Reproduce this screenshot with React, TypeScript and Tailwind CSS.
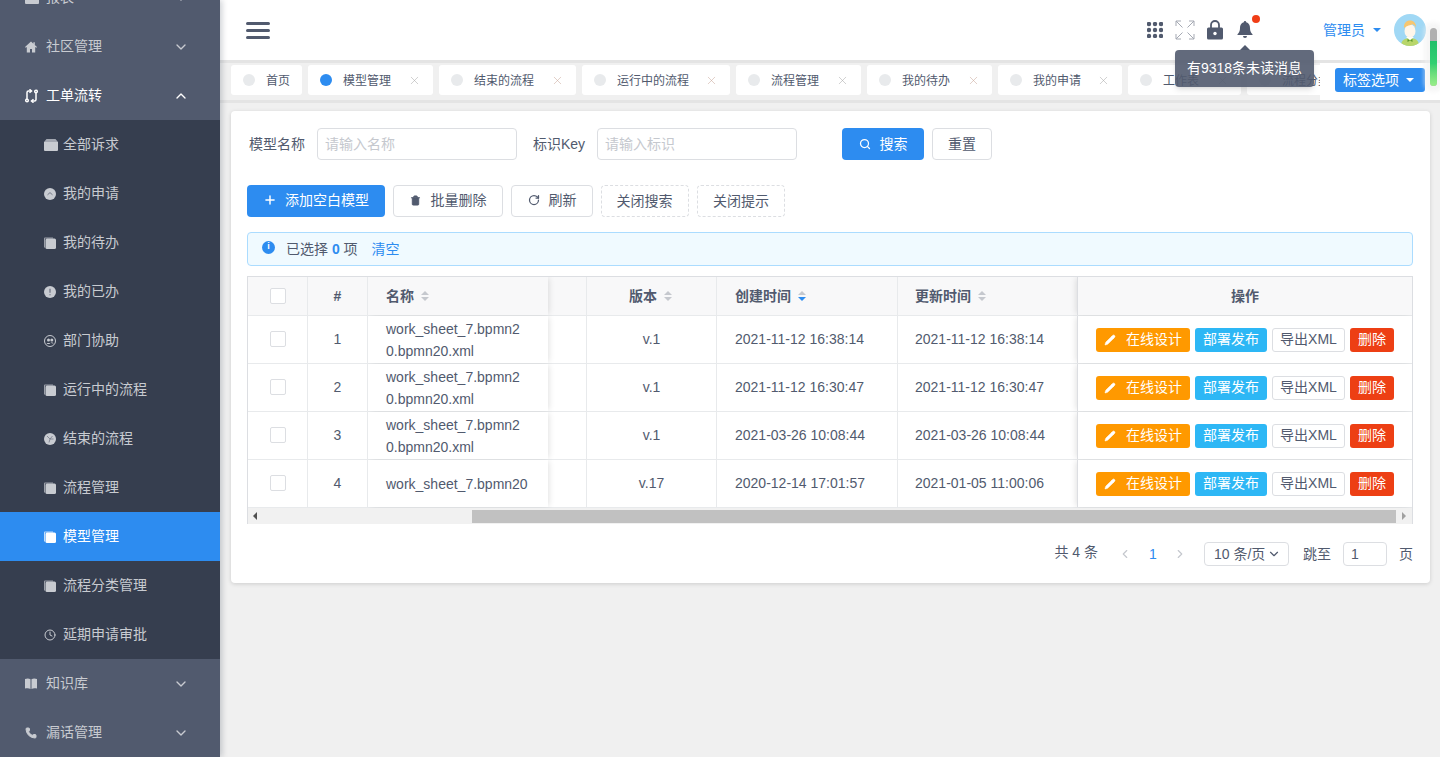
import { ReactNode } from 'react';
import { ChevronDown, ChevronUp, ChevronLeft, ChevronRight, X, Plus, Search, RotateCw, Pencil, Trash2, Clock, Phone } from 'lucide-react';

// ---- sidebar glyphs, drawn to match the reference ----
const HomeIcon = () => (
  <svg viewBox="0 0 12 12" className="w-3 h-3 fill-current"><path d="M6 .5 0 6l.7.7L1.800 6v5.500H5V8h2v3.500h3.200V6l1.100.7L12 6 9.800 4V1.200H8.400v1.500z" /></svg>
);
const SwapIcon = () => (
  <svg viewBox="0 0 13 14" className="w-[13px] h-3.5 fill-none stroke-current" strokeWidth="1.500">
    <path d="M6 2H3.500A1.500 1.500 0 0 0 2 3.500V10" />
    <path d="M4.500 .3 6.500 2l-2 1.700" />
    <circle cx="2" cy="11.500" r="1.300" />
    <path d="M7 12h2.500a1.500 1.500 0 0 0 1.500-1.500V4" />
    <path d="M8.500 13.700 6.500 12l2-1.700" />
    <circle cx="11" cy="2.500" r="1.300" />
  </svg>
);
const BoxIcon = () => (
  <svg viewBox="0 0 14 12" className="w-3.5 h-3 fill-current"><path d="M2.500 0h9L14 3H0z" opacity=".75" /><path d="M0 3h14v8a1 1 0 0 1-1 1H1a1 1 0 0 1-1-1z" /></svg>
);
const CopyIcon = () => (
  <svg viewBox="0 0 12 12" className="w-3 h-3 fill-current"><path d="M0 1.500A1 1 0 0 1 1 .5h8v1H1v9H0z" opacity=".7" /><rect x="1.500" y="1.500" width="10.500" height="10.500" rx="1.500" /></svg>
);
const CircleUpIcon = () => (
  <svg viewBox="0 0 12 12" className="w-3 h-3"><circle cx="6" cy="6" r="6" fill="currentColor" /><path d="M3.500 6.800 6 4.600l2.500 2.200" fill="none" stroke="#6b7080" strokeWidth=".9" /></svg>
);
const CircleAlertIcon = () => (
  <svg viewBox="0 0 12 12" className="w-3 h-3"><circle cx="6" cy="6" r="6" fill="currentColor" /><path d="M6 2.800v4M6 8.200v1" fill="none" stroke="#6b7080" strokeWidth="1.200" /></svg>
);
const CirclePeopleIcon = () => (
  <svg viewBox="0 0 12 12" className="w-3 h-3"><circle cx="6" cy="6" r="5.500" fill="none" stroke="currentColor" /><circle cx="4.500" cy="5" r="1.500" fill="currentColor" /><circle cx="7.800" cy="5" r="1.500" fill="currentColor" /><path d="M2.500 9c.3-1.500 3.500-1.500 4 0M6.500 7.800c1-.8 3-.4 3 1" fill="currentColor" /></svg>
);
const CircleSpokeIcon = () => (
  <svg viewBox="0 0 12 12" className="w-3 h-3"><circle cx="6" cy="6" r="6" fill="currentColor" /><path d="M6 6 3 3M6 6h3.500M6 6l-1 3.500M6 6l2.500-3" stroke="#6b7080" strokeWidth=".7" /></svg>
);
const BookIcon = () => (
  <svg viewBox="0 0 12 11" className="w-3 h-[11px] fill-current"><path d="M0 1c2-.9 4-.8 5.500.2V11C4 10 2 10 0 10.500zM12 1c-2-.9-4-.8-5.500.2V11c1.500-1 3.500-1 5.500-.5z" /></svg>
);

const menuSub: { label: string; icon: ReactNode; active?: boolean }[] = [
  { label: '全部诉求', icon: <BoxIcon /> },
  { label: '我的申请', icon: <CircleUpIcon /> },
  { label: '我的待办', icon: <CopyIcon /> },
  { label: '我的已办', icon: <CircleAlertIcon /> },
  { label: '部门协助', icon: <CirclePeopleIcon /> },
  { label: '运行中的流程', icon: <CopyIcon /> },
  { label: '结束的流程', icon: <CircleSpokeIcon /> },
  { label: '流程管理', icon: <CopyIcon /> },
  { label: '模型管理', icon: <CopyIcon />, active: true },
  { label: '流程分类管理', icon: <CopyIcon /> },
  { label: '延期申请审批', icon: <Clock className="w-3 h-3" strokeWidth={2} /> },
];

function TopItem({ label, icon, open }: { label: string; icon: ReactNode; open?: boolean }) {
  return (
    <div className={`flex items-center h-[49px] pl-[25px] pr-[31px] ${open ? 'text-white' : 'text-[#c8cbd1]'}`}>
      <span className="w-[21px] flex items-center">{icon}</span>
      <span className="flex-1">{label}</span>
      {open ? <ChevronUp className="w-4 h-4" /> : <ChevronDown className="w-4 h-4" />}
    </div>
  );
}

function Sidebar() {
  return (
    <aside className="w-[220px] h-full shrink-0 bg-[#515a6e] overflow-hidden relative z-20 shadow-[2px_0_6px_rgba(0,21,41,0.2)]">
      <div className="-mt-[27px]">
        <TopItem label="报表" icon={<BoxIcon />} />
        <TopItem label="社区管理" icon={<HomeIcon />} />
        <TopItem label="工单流转" icon={<SwapIcon />} open />
        <div className="bg-[#363e4f]">
          {menuSub.map((m) => (
            <div
              key={m.label}
              className={`flex items-center h-[49px] pl-[44px] ${m.active ? 'bg-[#2d8cf0] text-white' : 'text-[#c8cbd1]'}`}
            >
              <span className="w-[19px] flex items-center">{m.icon}</span>
              <span>{m.label}</span>
            </div>
          ))}
        </div>
        <TopItem label="知识库" icon={<BookIcon />} />
        <TopItem label="漏话管理" icon={<Phone className="w-3 h-3" fill="currentColor" />} />
      </div>
    </aside>
  );
}

function Avatar() {
  return (
    <svg viewBox="0 0 32 32" className="w-8 h-8 rounded-full">
      <rect width="32" height="32" fill="#a0d8f5" />
      <path d="M7 32c0-6 4-8 9-8s9 2 9 8z" fill="#b8d66a" />
      <path d="M12 23h8l-4 3z" fill="#fff" />
      <path d="M13.500 25l2.500 1.500-2.500 1.500zM18.500 25L16 26.500l2.500 1.500z" fill="#5d9a2c" />
      <ellipse cx="16" cy="17" rx="5.500" ry="6.800" fill="#fff6ea" />
      <path d="M10 14c-.5-5 2.500-7.500 6-7.500s6.500 2.500 6 7.500c-.5-2-1.800-3.300-3.500-3.700-2 1-5.500 1.200-8.500 3.700z" fill="#f6c670" />
    </svg>
  );
}

function Header() {
  return (
    <header className="h-[60px] shrink-0 bg-white flex items-center pl-[26px] relative z-10">
      <div className="w-6 flex flex-col gap-[4px]">
        <span className="h-[3px] bg-[#515a6e] rounded-sm" />
        <span className="h-[3px] bg-[#515a6e] rounded-sm" />
        <span className="h-[3px] bg-[#515a6e] rounded-sm" />
      </div>
      <div className="flex-1" />
      <svg viewBox="0 0 16 16" className="w-4 h-4 fill-[#515a6e] mr-3">
        {[2, 8, 14].flatMap((y) => [2, 8, 14].map((x) => <circle key={`${x}-${y}`} cx={x} cy={y} r="2.200" />))}
      </svg>
      <svg viewBox="0 0 20 20" className="w-5 h-5 fill-none stroke-[#a5a9b3] mr-3" strokeWidth="1">
        <path d="M1 6V1h5M1 1l6.500 6.500M19 6V1h-5M19 1l-6.500 6.500M1 14v5h5M1 19l6.500-6.500M19 14v5h-5M19 19l-6.500-6.500" />
      </svg>
      <svg viewBox="0 0 16 20" className="w-4 h-5 mr-[14px]">
        <path d="M4 8V5a4 4 0 0 1 8 0v3" fill="none" stroke="#515a6e" strokeWidth="1.800" />
        <rect y="7.500" width="16" height="12" rx="1.500" fill="#515a6e" />
        <circle cx="8" cy="13.500" r="1.700" fill="#fff" />
      </svg>
      <div className="relative w-4 mr-[70px]">
        <svg viewBox="0 0 16 20" className="w-4 h-5 fill-[#515a6e]">
          <path d="M8 1a1.200 1.200 0 0 1 1.200 1.300C12 3 13 5.500 13 8c0 3 .8 4.500 2.500 6.200V15H.5v-.8C2.200 12.500 3 11 3 8c0-2.500 1-5 3.800-5.700A1.200 1.200 0 0 1 8 1zM6 16h4a2 2 0 0 1-4 0z" />
        </svg>
        <span className="absolute -top-[5px] left-[15px] w-2 h-2 rounded-full bg-[#f03d16]" />
        <div className="absolute top-[30px] left-[-62px] w-[139px] h-[37px] rounded bg-[#515a6e]/90 text-white flex items-center justify-center whitespace-nowrap shadow-md">
          <span className="absolute -top-[5px] left-[65px] w-0 h-0 border-x-[5px] border-x-transparent border-b-[5px] border-b-[#515a6e]" />
          有9318条未读消息
        </div>
      </div>
      <span className="text-[#2d8cf0] mr-[8px]">管理员</span>
      <span className="w-0 h-0 border-x-[4px] border-x-transparent border-t-[4px] border-t-[#2d8cf0] mr-[13px]" />
      <div className="mr-[14px]"><Avatar /></div>
    </header>
  );
}

const tabs = [
  { label: '首页', w: 'w-[71px]', plain: true },
  { label: '模型管理', w: 'w-[125px]', active: true },
  { label: '结束的流程', w: 'w-[137px]', warm: true },
  { label: '运行中的流程', w: 'w-[148px]', warm: true },
  { label: '流程管理', w: 'w-[125px]' },
  { label: '我的待办', w: 'w-[125px]', warm: true },
  { label: '我的申请', w: 'w-[124px]' },
  { label: '工作表', w: 'w-[113px]' },
  { label: '流程分类管理', w: 'w-[148px]' },
];

function TabsBar() {
  return (
    <div className="h-[43px] shrink-0 flex bg-[#f0f0f0] border-y-[3px] border-[#e4e4e4]">
      <div className="flex-1 min-w-0 overflow-hidden flex gap-[6px] pl-[11px] pt-[2px]">
        {tabs.map((t) => (
          <div key={t.label} className={`${t.w} shrink-0 h-[30px] bg-white rounded-[3px] flex items-center pl-3 pr-[12px] pt-[1px] text-[12px] text-[#515a6e]`}>
            <span className={`w-3 h-3 rounded-full shrink-0 mr-[11px] -mt-[1px] ${t.active ? 'bg-[#2d8cf0]' : 'bg-[#e8eaec]'}`} />
            <span className="flex-1 whitespace-nowrap">{t.label}</span>
            {!t.plain && <X className={`w-[13px] h-[13px] shrink-0 ${t.warm ? 'text-[#c9a89a]' : 'text-[#aaaaaa]'}`} strokeWidth={1} />}
          </div>
        ))}
      </div>
      <div className="w-[120px] shrink-0 bg-white pl-[15px] pt-[5px]">
        <button className="w-[90px] h-6 rounded-[3px] bg-[#2d8cf0] text-white flex items-center pl-2 gap-[7px]">
          标签选项
          <span className="w-0 h-0 border-x-[4px] border-x-transparent border-t-[4px] border-t-white" />
        </button>
      </div>
    </div>
  );
}

function Btn({ children, className = '' }: { children: ReactNode; className?: string }) {
  return (
    <button className={`h-8 rounded border border-[#dcdee2] bg-white text-[#515a6e] flex items-center justify-center shrink-0 ${className}`}>
      {children}
    </button>
  );
}

const SortArrows = ({ on }: { on?: boolean }) => (
  <span className="inline-flex flex-col gap-[2px] ml-[7px] align-middle">
    <span className="w-0 h-0 border-x-[4px] border-x-transparent border-b-[4px] border-b-[#c5c8ce]" />
    <span className={`w-0 h-0 border-x-[4px] border-x-transparent border-t-[4px] ${on ? 'border-t-[#2d8cf0]' : 'border-t-[#c5c8ce]'}`} />
  </span>
);

const rows = [
  { no: 1, name: ['work_sheet_7.bpmn2', '0.bpmn20.xml'], ver: 'v.1', created: '2021-11-12 16:38:14', updated: '2021-11-12 16:38:14' },
  { no: 2, name: ['work_sheet_7.bpmn2', '0.bpmn20.xml'], ver: 'v.1', created: '2021-11-12 16:30:47', updated: '2021-11-12 16:30:47' },
  { no: 3, name: ['work_sheet_7.bpmn2', '0.bpmn20.xml'], ver: 'v.1', created: '2021-03-26 10:08:44', updated: '2021-03-26 10:08:44' },
  { no: 4, name: ['work_sheet_7.bpmn20'], ver: 'v.17', created: '2020-12-14 17:01:57', updated: '2021-01-05 11:00:06' },
];

const Checkbox = ({ className = '' }: { className?: string }) => (
  <span className={`block w-4 h-4 rounded-[2px] border border-[#dcdee2] bg-white ${className}`} />
);

function DataTable() {
  const fixedL = 'shadow-[2px_0_6px_-1px_rgba(0,0,0,0.12)] relative z-[1] [clip-path:inset(0_-8px_-1px_0)]';
  const fixedR = 'shadow-[-2px_0_6px_-1px_rgba(0,0,0,0.12)] relative z-[1] [clip-path:inset(0_0_-1px_-8px)]';
  const line = 'border-r border-[#e8eaec]';
  return (
    <div className="mt-[10px] border border-[#dcdee2] border-b-0 overflow-hidden">
      <div className="flex h-[39px] bg-[#f8f8f9] border-b border-[#e8eaec] font-bold">
        <div className={`w-[60px] ${line} flex items-center justify-center`}><Checkbox /></div>
        <div className={`w-[60px] ${line} flex items-center justify-center`}>#</div>
        <div className={`w-[180px] bg-[#f8f8f9] pl-[18px] flex items-center ${fixedL}`}>名称<SortArrows /></div>
        <div className={`w-[39px] ${line}`} />
        <div className={`w-[130px] ${line} flex items-center justify-center pr-[2px]`}>版本<SortArrows /></div>
        <div className={`w-[181px] ${line} pl-[18px] flex items-center`}>创建时间<SortArrows on /></div>
        <div className="w-[179px] pl-[17px] flex items-center">更新时间<SortArrows /></div>
        <div className={`flex-1 bg-[#f8f8f9] flex items-center justify-center border-l border-[#dcdee2] ${fixedR}`}>操作</div>
      </div>
      {rows.map((r) => (
        <div key={r.no} className="flex h-[48px] border-b border-[#e8eaec] bg-white">
          <div className={`w-[60px] ${line} flex items-center justify-center`}><Checkbox className="-mt-[2px]" /></div>
          <div className={`w-[60px] ${line} flex items-center justify-center`}>{r.no}</div>
          <div className={`w-[180px] bg-white pl-[18px] flex flex-col justify-center leading-[22px] whitespace-nowrap ${fixedL}`}>
            {r.name.map((n) => <span key={n}>{n}</span>)}
          </div>
          <div className={`w-[39px] ${line}`} />
          <div className={`w-[130px] ${line} flex items-center justify-center`}>{r.ver}</div>
          <div className={`w-[181px] ${line} pl-[18px] flex items-center`}>{r.created}</div>
          <div className="w-[179px] pl-[17px] flex items-center">{r.updated}</div>
          <div className={`flex-1 bg-white flex items-center pl-[18px] gap-[5px] border-l border-[#dcdee2] ${fixedR}`}>
            <button className="w-[94px] h-6 rounded-[3px] bg-[#ff9900] text-white flex items-center justify-center gap-[10px]">
              <Pencil className="w-3 h-3" fill="currentColor" strokeWidth={1} />在线设计
            </button>
            <button className="w-[72px] h-6 rounded-[3px] bg-[#2db7f5] text-white">部署发布</button>
            <button className="w-[73px] h-6 rounded-[3px] bg-white border border-[#dcdee2]">导出XML</button>
            <button className="w-[44px] h-6 rounded-[3px] bg-[#ed3f14] text-white">删除</button>
          </div>
        </div>
      ))}
      <div className="flex items-center h-4 bg-[#f1f1f1]">
        <span className="w-0 h-0 ml-[5px] border-y-[4px] border-y-transparent border-r-[4px] border-r-[#505050]" />
        <div className="w-[215px] shrink-0" />
        <div className="h-[13px] flex-1 bg-[#c1c1c1]" />
        <span className="w-4 flex justify-center"><span className="w-0 h-0 border-y-[4px] border-y-transparent border-l-[4px] border-l-[#a0a0a0]" /></span>
      </div>
    </div>
  );
}

function Pagination() {
  return (
    <div className="flex items-center justify-end mt-[18px] h-6">
      <span className="-mt-[4px]">共 4 条</span>
      <ChevronLeft className="w-[14px] h-[14px] ml-[20px] text-[#c5c8ce]" />
      <span className="ml-[15px] w-3 text-center text-[#2d8cf0]">1</span>
      <ChevronRight className="w-[14px] h-[14px] ml-[14px] text-[#c5c8ce]" />
      <div className="w-[85px] h-6 ml-[17px] rounded border border-[#dcdee2] flex items-center pl-[9px] gap-[2px] whitespace-nowrap">
        10 条/页<ChevronDown className="w-[14px] h-[14px]" />
      </div>
      <span className="ml-[14px]">跳至</span>
      <input readOnly value="1" className="w-[44px] h-6 ml-[12px] rounded border border-[#dcdee2] px-[7px] outline-none" />
      <span className="ml-3">页</span>
    </div>
  );
}

function ContentCard() {
  return (
    <div className="bg-white rounded ml-[11px] mr-[10px] mt-[8px] h-[472px] pt-[17px] pl-[16px] pr-[17px] shadow-[0_1px_4px_rgba(0,0,0,0.15)]">
      <div className="flex items-center">
        <span className="ml-[2px] w-[68px]">模型名称</span>
        <input readOnly placeholder="请输入名称" className="w-[200px] h-8 rounded border border-[#dcdee2] px-[7px] outline-none placeholder:text-[#c5c8ce]" />
        <span className="ml-4 w-[64px]">标识Key</span>
        <input readOnly placeholder="请输入标识" className="w-[200px] h-8 rounded border border-[#dcdee2] px-[7px] outline-none placeholder:text-[#c5c8ce]" />
        <button className="ml-[45px] w-[82px] h-8 rounded bg-[#2d8cf0] text-white flex items-center justify-center gap-[9px]">
          <Search className="w-3 h-3" strokeWidth={2.500} />搜索
        </button>
        <Btn className="ml-2 w-[60px]">重置</Btn>
      </div>
      <div className="flex items-center gap-2 mt-[25px]">
        <button className="w-[138px] h-8 rounded bg-[#2d8cf0] text-white flex items-center justify-center gap-[8px] pb-[2px]">
          <Plus className="w-[14px] h-[14px]" strokeWidth={2.500} />添加空白模型
        </button>
        <Btn className="w-[110px] gap-[10px] pb-[2px]"><Trash2 className="w-[11px] h-[11px]" fill="currentColor" />批量删除</Btn>
        <Btn className="w-[82px] gap-[9px] pb-[2px]"><RotateCw className="w-3 h-3" strokeWidth={2.500} />刷新</Btn>
        <Btn className="w-[88px] border-dashed pr-[1px]">关闭搜索</Btn>
        <Btn className="w-[88px] border-dashed">关闭提示</Btn>
      </div>
      <div className="mt-[15px] h-[34px] rounded border border-[#abdcff] bg-[#f0faff] flex items-center pl-[14px]">
        <span className="w-[13px] h-[13px] rounded-full bg-[#2d8cf0] text-white text-[9px] font-bold flex items-center justify-center -mt-[4px] mr-[11px]">i</span>
        已选择&nbsp;<b className="text-[#2d8cf0]">0</b>&nbsp;项
        <span className="ml-[14px] text-[#2d8cf0]">清空</span>
      </div>
      <DataTable />
      <Pagination />
    </div>
  );
}

export default function App() {
  return (
    <div className="w-[1440px] h-[757px] flex overflow-hidden bg-[#f0f0f0] text-[14px] text-[#515a6e] font-['Liberation_Sans','Noto_Sans_CJK_SC',sans-serif]">
      <Sidebar />
      <main className="flex-1 min-w-0 flex flex-col relative">
        <Header />
        <TabsBar />
        <ContentCard />
        {/* scrollbar thumb over the top right corner */}
        <div className="absolute top-[28px] right-[3px] w-[7px] h-[58px] z-30 rounded-full overflow-hidden bg-[#b0b0b0] shadow-[0_0_4px_6px_rgba(240,240,240,0.6)]">
          <div className="mt-[13px] h-[45px] bg-gradient-to-b from-[#1fbf6a] via-[#30cf70] to-[#9aee8a]" />
        </div>
      </main>
    </div>
  );
}
